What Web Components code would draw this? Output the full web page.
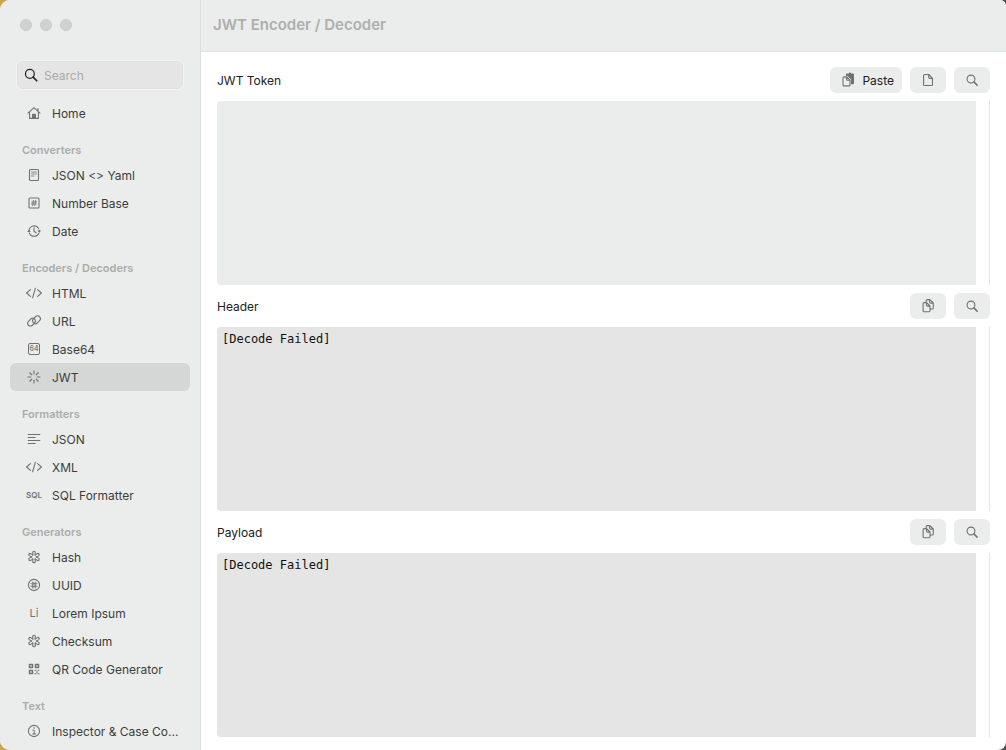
<!DOCTYPE html>
<html lang="en">
<head>
<meta charset="utf-8">
<meta name="viewport" content="width=device-width, initial-scale=1">
<title>JWT Encoder / Decoder</title>
<style>
  html, body { margin: 0; height: 100%; }
  body {
    font: 12px/21px Inter, "Liberation Sans", sans-serif;
    color: #202221;
    background: linear-gradient(90deg, #cba64f 0 50%, #4d4f50 50%);
    overflow: hidden;
  }
</style>
</head>
<body>
<app-window>
  <side-bar slot="sidebar">
    <nav-item icon="home">Home</nav-item>
    <nav-group label="Converters">
      <nav-item icon="note">JSON &lt;&gt; Yaml</nav-item>
      <nav-item icon="number">Number Base</nav-item>
      <nav-item icon="clock">Date</nav-item>
    </nav-group>
    <nav-group label="Encoders / Decoders">
      <nav-item icon="code">HTML</nav-item>
      <nav-item icon="link">URL</nav-item>
      <nav-item icon="base64">Base64</nav-item>
      <nav-item icon="rays" current>JWT</nav-item>
    </nav-group>
    <nav-group label="Formatters">
      <nav-item icon="lines">JSON</nav-item>
      <nav-item icon="code">XML</nav-item>
      <nav-item icon="sql">SQL Formatter</nav-item>
    </nav-group>
    <nav-group label="Generators">
      <nav-item icon="asterisk">Hash</nav-item>
      <nav-item icon="uuid">UUID</nav-item>
      <nav-item icon="li">Lorem Ipsum</nav-item>
      <nav-item icon="asterisk">Checksum</nav-item>
      <nav-item icon="qr">QR Code Generator</nav-item>
    </nav-group>
    <nav-group label="Text">
      <nav-item icon="info">Inspector &amp; Case Co...</nav-item>
    </nav-group>
  </side-bar>
  <span slot="title">JWT Encoder / Decoder</span>
  <editor-panel label="JWT Token">
    <tool-button icon="paste" label="Paste">Paste</tool-button>
    <tool-button icon="doc" label="Open file"></tool-button>
    <tool-button icon="search" label="Search token"></tool-button>
  </editor-panel>
  <editor-panel label="Header" value="[Decode Failed]" readonly>
    <tool-button icon="copy" label="Copy header"></tool-button>
    <tool-button icon="search" label="Search header"></tool-button>
  </editor-panel>
  <editor-panel label="Payload" value="[Decode Failed]" readonly>
    <tool-button icon="copy" label="Copy payload"></tool-button>
    <tool-button icon="search" label="Search payload"></tool-button>
  </editor-panel>
</app-window>

<script>
const petals = [0, 60, 120, 180, 240, 300].map(a =>
  `<path transform="rotate(${a} 8 8)" d="M6.9 6 6.7 3.5a1.3 1.3 0 0 1 2.6 0L9.1 6"/>`).join("");
const rays = [0, 45, 90, 135, 180, 225, 270, 315].map(a =>
  `<path transform="rotate(${a} 8 8)" d="M8 2v2.8"/>`).join("");

const icons = {
  home: `<path d="M2 8.2 8 2.6l6 5.6M3.6 7.2v6.2h8.8V7.2M12 6V3.6"/><path d="M6.6 13.4V9.2h2.8v4.2z" fill="currentColor"/>`,
  note: `<rect x="3.5" y="2.5" width="9" height="11" rx="1"/><path d="M5.5 5h5M5.5 7h5M5.5 9h2.5" stroke-width=".8"/>`,
  number: `<rect x="3" y="3" width="10" height="10" rx="1"/><path d="M7.4 5.4 6.6 10.6M9.6 5.4 8.8 10.6M5.7 7h4.9M5.4 9h4.9" stroke-width=".9"/>`,
  clock: `<path d="M3 7.6a5.2 5.2 0 0 1 9.7-2M3.3 10a5.2 5.2 0 0 0 9.6.2M13.2 7.2v1.4M8 4.8v3.4l2 1.6"/><path d="m1.2 9 1.8-2.2L4.8 9zM11.4 7.6h3.8l-1.9 2.2z" fill="currentColor" stroke="none"/>`,
  code: `<path d="M4.4 4.6.6 8l3.8 3.4M11.6 4.6 15.4 8l-3.8 3.4M9.4 3.2 6.6 12.8"/>`,
  link: `<rect x="1.2" y="6.4" width="8.6" height="5.6" rx="2.8" transform="rotate(-45 5.5 9.2)"/><rect x="6.2" y="4" width="8.6" height="5.6" rx="2.8" transform="rotate(-45 10.5 6.8)"/>`,
  rays: rays,
  lines: `<path d="M2.2 3.5h11.6M2.2 6.5h7M2.2 9.5h11.6M2.2 12.5h7"/>`,
  asterisk: petals,
  uuid: `<circle cx="8" cy="8" r="5.6"/><path d="M6.8 5v6M9.2 5v6M5 6.8h6M5 9.2h6"/>`,
  qr: `<path d="M3.5 3.5h3v3h-3zM9.5 3.5h3v3h-3zM3.5 9.5h3v3h-3z" stroke-width="1.5"/><path d="M9 9.3h1M12 9.3h1M10.5 11h1M9 12.7h1M12 12.7h1" stroke-width="1.1"/>`,
  info: `<circle cx="8" cy="8" r="5.6"/><path d="M6.9 7.2h1.3v3.6M6.6 10.9h3.1" stroke-width="1"/><circle cx="8" cy="5" r=".8" fill="currentColor" stroke="none"/>`,
  search: `<circle cx="7" cy="7" r="3.9"/><path d="m9.9 9.9 3.2 3.2" stroke-width="1.5"/>`,
  doc: `<path d="M4.9 2.5h3.9l3.7 3.8v6.1q0 1.1-1.1 1.1H4.7q-1.1 0-1.1-1.1V3.6q0-1.1 1.3-1.1zM8.7 2.6v2.7q0 1.1 1.1 1.1h2.6"/>`,
  copy: `<path d="M4.2 4.6h2.4L10 8v4.7q0 1.1-1.1 1.1H4.2q-1.1 0-1.1-1.1v-7q0-1.1 1.1-1.1zM6.5 4.7V7q0 1.1 1.1 1.1h2.3M6.2 4.4V2.7q0-1.1 1.1-1.1h2.5L13.3 5v4.9q0 1.1-1.1 1.1h-2M9.6 1.7V4q0 1.1 1.1 1.1h2.5"/>`,
  paste: `<path d="M7 1.6h1.8a1.2 1.2 0 0 1 2.4 0H13q1 0 1 1v8.6q0 1-1 1h-2V7.4L7.4 3.9H6V2.6q0-1 1-1z" fill="currentColor" stroke="none"/><path d="M4 4.9h2.6L10 8.2v4.7q0 1-1 1H4q-1 0-1-1v-7q0-1 1-1zM6.5 5v2.2q0 1 1 1h2.4"/>`
};
const wordIcons = { sql: "SQL", li: "Li", base64: "64" };

function attach(el, html) {
  const t = document.createElement("template");
  t.innerHTML = html;
  el.attachShadow({ mode: "open" }).append(t.content.cloneNode(true));
  return el.shadowRoot;
}

customElements.define("ui-icon", class extends HTMLElement {
  connectedCallback() {
    if (this.shadowRoot) return;
    const name = this.getAttribute("name");
    const body = name in wordIcons
      ? `<span class="${name}">${wordIcons[name]}</span>`
      : `<svg viewBox="0 0 16 16" aria-hidden="true">${icons[name]}</svg>`;
    attach(this, `<style>
      :host { display: flex; align-items: center; justify-content: center; flex: none; width: 16px; height: 16px; }
      svg { width: 100%; height: 100%; fill: none; stroke: currentColor; stroke-width: 1.1; stroke-linecap: round; stroke-linejoin: round; }
      span { line-height: 16px; }
      .sql { font-size: 8px; font-weight: 600; }
      .li { font-size: 11px; }
      .base64 { box-sizing: border-box; width: 12px; height: 12px; border: 1px solid; border-radius: 2px;
                display: flex; justify-content: center; font-size: 7px; line-height: 10px; font-weight: 500; }
    </style>${body}`);
  }
});

customElements.define("nav-item", class extends HTMLElement {
  connectedCallback() {
    if (this.shadowRoot) return;
    const current = this.hasAttribute("current");
    attach(this, `<style>
      :host { display: block; }
      a { display: flex; align-items: center; gap: 10px; height: 28px; padding: 0 8px 0 16px;
          border-radius: 6px; color: #3c3e3d; text-decoration: none; white-space: nowrap; }
      a[aria-current] { background: #d5d7d6; }
      ui-icon { color: #707271; }
    </style>
    <a href="#"${current ? ' aria-current="page"' : ""}><ui-icon name="${this.getAttribute("icon")}"></ui-icon><slot></slot></a>`);
  }
});

customElements.define("nav-group", class extends HTMLElement {
  connectedCallback() {
    if (this.shadowRoot) return;
    attach(this, `<style>
      :host { display: block; }
      h2 { margin: 0; padding: 14px 12px 2px; font-size: 11px; line-height: 18px; font-weight: 600; color: #aaacab; }
    </style>
    <h2>${this.getAttribute("label")}</h2><slot></slot>`);
  }
});

customElements.define("side-bar", class extends HTMLElement {
  connectedCallback() {
    if (this.shadowRoot) return;
    attach(this, `<style>
      :host { display: block; box-sizing: border-box; height: 100%; padding: 19px 10px 0; overflow: hidden;
              background: #ebedec; border-right: 1px solid #dcdedd; }
      .lights { display: flex; gap: 8px; padding: 0 10px; }
      .lights button { width: 12px; height: 12px; padding: 0; border: 1px solid #c8cac9; border-radius: 50%; background: #d1d1d1; }
      .search { display: flex; align-items: center; gap: 4px; box-sizing: border-box; height: 28px;
                margin: 30px 7px 10px; padding: 0 4px; border: 1px solid #dfe0e0;
                border-radius: 6px; background: #e5e5e5; box-shadow: 0 0 0 1px #f1f2f2; }
      .search ui-icon { width: 18px; height: 18px; color: #202221; }
      input { flex: 1; min-width: 0; padding: 0; border: 0; outline: 0; background: none; font: inherit; color: #202221; appearance: none; }
      input::placeholder { color: #a9abaa; opacity: 1; }
    </style>
    <div class="lights"><button aria-label="Close"></button><button aria-label="Minimize"></button><button aria-label="Zoom"></button></div>
    <label class="search"><ui-icon name="search"></ui-icon><input type="search" placeholder="Search" aria-label="Search"></label>
    <nav><slot></slot></nav>`);
  }
});

customElements.define("tool-button", class extends HTMLElement {
  connectedCallback() {
    if (this.shadowRoot) return;
    const wide = this.getAttribute("icon") === "paste";
    attach(this, `<style>
      :host { display: block; }
      button { display: flex; align-items: center; gap: 6px; height: 26px; padding: 0 10px; border: 0;
               border-radius: 6px; background: #ebedec; color: #202221; font: inherit; }
      .wide { padding-right: 8px; }
      ui-icon { color: #707271; }
    </style>
    <button type="button"${wide ? ' class="wide"' : ""} aria-label="${this.getAttribute("label")}"><ui-icon name="${this.getAttribute("icon")}"></ui-icon><slot></slot></button>`);
  }
});

customElements.define("editor-panel", class extends HTMLElement {
  connectedCallback() {
    if (this.shadowRoot) return;
    const ro = this.hasAttribute("readonly");
    const root = attach(this, `<style>
      :host { display: flex; flex-direction: column; gap: 8px; flex: 1; min-height: 0; }
      header { display: flex; align-items: center; gap: 8px; height: 26px; }
      label { flex: 1; }
      .field { display: flex; flex: 1; min-height: 0; padding-right: 13px; border-right: 1px solid #e4e6e5; }
      textarea { flex: 1; min-width: 0; box-sizing: border-box; margin: 0; padding: 2px 5px; border: 0; outline: 0; resize: none;
                 border-radius: 4px 0 0 4px; background: #ebedec; color: #111;
                 font: 12px/20px "DejaVu Sans Mono", "Liberation Mono", monospace; }
      textarea[readonly] { background: #e5e5e5; }
    </style>
    <header><label for="text">${this.getAttribute("label")}</label><slot></slot></header>
    <div class="field"><textarea id="text" spellcheck="false"${ro ? " readonly" : ""}></textarea></div>`);
    root.querySelector("textarea").value = this.getAttribute("value") || "";
  }
});

customElements.define("app-window", class extends HTMLElement {
  connectedCallback() {
    if (this.shadowRoot) return;
    attach(this, `<style>
      :host { display: grid; grid-template-columns: 201px 1fr; height: 100%; overflow: hidden;
              border-radius: 10px 6px 8px 10px; background: #fff; }
      aside { min-height: 0; }
      .content { display: flex; flex-direction: column; min-width: 0; min-height: 0; }
      .bar { box-sizing: border-box; height: 52px; padding: 14px 12px; background: #ebedec; border-bottom: 1px solid #dfe1e0; }
      h1 { margin: 0; font-size: 15px; line-height: 21px; font-weight: 600; color: #adafae; }
      main { display: flex; flex-direction: column; flex: 1; gap: 8px; min-height: 0; padding: 15px 16px 13px; }
    </style>
    <aside><slot name="sidebar"></slot></aside>
    <div class="content"><div class="bar"><h1><slot name="title"></slot></h1></div><main><slot></slot></main></div>`);
  }
});
</script>
</body>
</html>
